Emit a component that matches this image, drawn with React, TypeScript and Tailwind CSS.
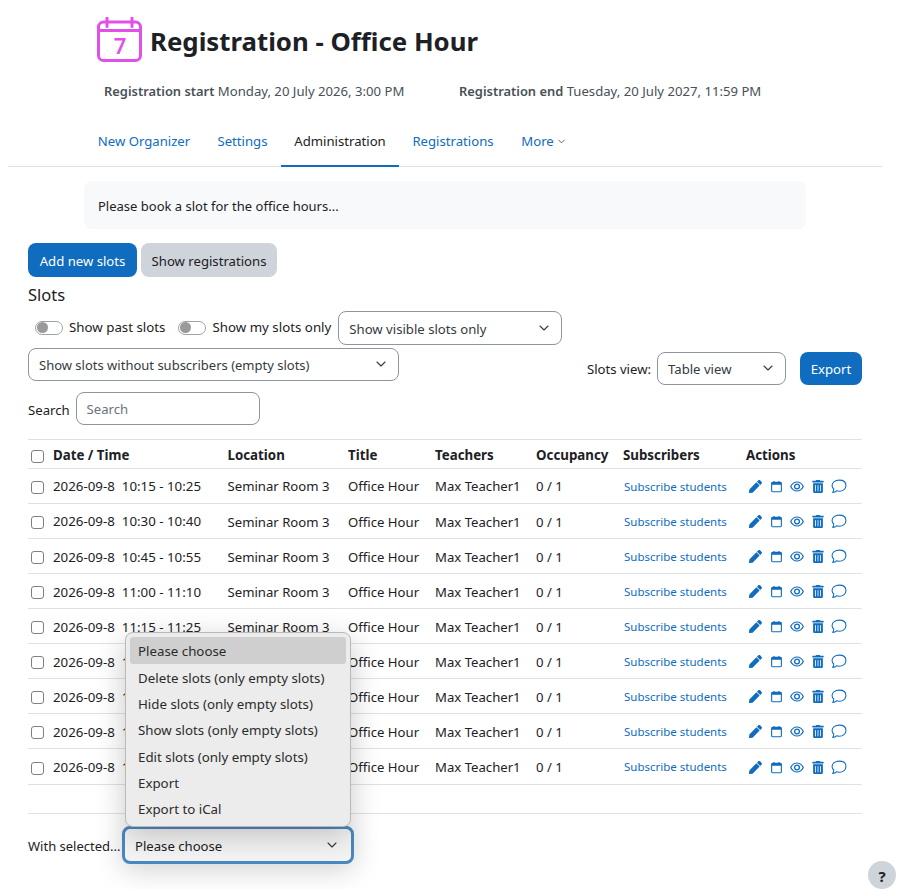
import { FaPen, FaTrashAlt } from "react-icons/fa";

const rows = [
  "10:15 - 10:25",
  "10:30 - 10:40",
  "10:45 - 10:55",
  "11:00 - 11:10",
  "11:15 - 11:25",
  "11:30 - 11:40",
  "11:45 - 11:55",
  "12:00 - 12:10",
  "12:15 - 12:25",
];

const menuItems = [
  "Delete slots (only empty slots)",
  "Hide slots (only empty slots)",
  "Show slots (only empty slots)",
  "Edit slots (only empty slots)",
  "Export",
  "Export to iCal",
];

function Chevron({ className }: { className?: string }) {
  return (
    <svg viewBox="0 0 10 6" className={className ?? "h-[6px] w-[10px]"} fill="none" stroke="#343a40" strokeWidth="1.1" strokeLinecap="round" strokeLinejoin="round">
      <path d="M1 1l4 4 4-4" />
    </svg>
  );
}

function Select({ label, className }: { label: string; className: string }) {
  return (
    <div className={`flex items-center justify-between rounded-lg border border-[#8f959e] bg-white pl-[10px] pr-[12px] text-[#343a40] ${className}`}>
      <span className="pt-[4px]">{label}</span>
      <Chevron />
    </div>
  );
}

function Toggle({ label }: { label: string }) {
  return (
    <div className="flex items-center">
      <div className="flex h-[14px] w-[28px] items-center rounded-full border border-[#9ca3ab] bg-white pl-[1px]">
        <div className="h-[11px] w-[11px] rounded-full bg-[#9a9a9a]" />
      </div>
      <span className="ml-[6px] text-[13.3px]">{label}</span>
    </div>
  );
}

function Checkbox() {
  return <div className="h-[13px] w-[13px] rounded-[3px] border border-[#7d7f8c] bg-white" />;
}

function CalendarSmall() {
  return (
    <svg viewBox="0 0 12 13" className="h-[13px] w-[11px]" fill="none">
      <rect x="0.7" y="2" width="10.6" height="10.3" rx="1.2" stroke="#0f6cbf" strokeWidth="1.2" />
      <rect x="0.7" y="2" width="10.6" height="2.6" fill="#0f6cbf" />
      <path d="M3.3 0.4v2M8.7 0.4v2" stroke="#0f6cbf" strokeWidth="1.2" />
    </svg>
  );
}

function EyeIcon() {
  return (
    <svg viewBox="0 0 14 11" className="h-[11px] w-[14px]" fill="none" stroke="#0f6cbf">
      <path d="M0.7 5.5C2.2 2.5 4.4 1 7 1s4.8 1.5 6.3 4.5C11.8 8.5 9.6 10 7 10S2.2 8.5 0.7 5.5z" strokeWidth="1.2" />
      <circle cx="7" cy="5.5" r="2.4" strokeWidth="1.3" />
    </svg>
  );
}

function CommentIcon() {
  return (
    <svg viewBox="0 0 15 14" className="h-[15px] w-[16px]" fill="none" stroke="#0f6cbf" strokeWidth="1" strokeLinejoin="round">
      <path d="M7.7 1C3.9 1 1 3.2 1 6c0 1.3.6 2.4 1.6 3.3-.1 1.2-.5 2.4-1 3.4 1.5-.2 2.8-.8 3.6-1.6.8.3 1.6.4 2.5.4 3.7 0 6.3-2.4 6.3-5.5S11.4 1 7.7 1z" />
    </svg>
  );
}

function ActivityIcon() {
  return (
    <svg viewBox="0 0 45 45" className="h-[45px] w-[45px]" fill="none">
      <rect x="1.5" y="5" width="42" height="38.5" rx="5" stroke="#e250ea" strokeWidth="3" />
      <path d="M1.5 13.5h42" stroke="#e250ea" strokeWidth="3" />
      <path d="M10 1v8.5M35 1v8.5" stroke="#e250ea" strokeWidth="3" strokeLinecap="round" />
      <text x="23" y="37" textAnchor="middle" fontSize="22" fontWeight="600" fill="#e250ea" fontFamily="'Noto Sans', sans-serif">7</text>
    </svg>
  );
}

export default function App() {
  return (
    <div className="relative h-[889px] w-[910px] overflow-hidden bg-white pt-[17px] font-['Noto_Sans',sans-serif] text-[13.15px] text-[#1d2125]">
      <header className="flex items-start pl-[97px]">
        <ActivityIcon />
        <h1 className="ml-[8px] h-[45px] text-[25.8px] font-bold leading-[48px]">Registration - Office Hour</h1>
      </header>

      <div className="mt-[20px] flex pl-[104px] text-[#495057]">
        <div className="w-[355px]"><span className="text-[12.9px] font-semibold">Registration start</span> Monday, 20 July 2026, 3:00 PM</div>
        <div><span className="text-[12.9px] font-semibold">Registration end</span> Tuesday, 20 July 2027, 11:59 PM</div>
      </div>

      <nav className="ml-[8px] mr-[28px] mt-[15px] flex h-[50px] border-b border-[#dee2e6] pl-[76px] text-[#0f6cbf]">
        <a className="flex w-[120px] items-center justify-center pt-[1px]">New Organizer</a>
        <a className="flex w-[77px] items-center justify-center pt-[1px]">Settings</a>
        <a className="-mb-px flex w-[118px] items-center justify-center border-b-2 border-[#0f6cbf] pt-[2px] text-[#1d2125]">Administration</a>
        <a className="flex w-[108px] items-center justify-center pt-[1px]">Registrations</a>
        <a className="flex w-[72px] items-center justify-center gap-[4px] pt-[1px]">
          More
          <Chevron className="h-[5px] w-[7px]" />
        </a>
      </nav>

      <main className="pl-[28px] pr-[48px]">
        <div className="ml-[56px] mt-[14px] flex h-[48px] w-[722px] items-center rounded-lg bg-[#f8f9fa] pl-[14px] pt-[5px] text-[13px]">
          Please book a slot for the office hours...
        </div>

        <div className="mt-[14px] flex gap-[4px]">
          <button className="h-[34px] w-[109px] rounded-lg bg-[#0f6cbf] pt-[5px] text-white">Add new slots</button>
          <button className="h-[34px] w-[136px] rounded-lg bg-[#ced4da] pt-[5px] text-[#1d2125]">Show registrations</button>
        </div>

        <h2 className="mt-[6px] text-[16.5px] leading-[24px]">Slots</h2>

        <div className="mt-[4px] flex h-[34px] items-center pl-[7px]">
          <Toggle label="Show past slots" />
          <div className="w-[13px]" />
          <Toggle label="Show my slots only" />
          <Select label="Show visible slots only" className="ml-[7px] h-[34px] w-[224px]" />
        </div>

        <div className="mt-[3px] flex items-start justify-between">
          <Select label="Show slots without subscribers (empty slots)" className="h-[33px] w-[371px] text-[13px]" />
          <div className="mt-[4px] flex items-center">
            <span className="mr-[6px] pt-[4px]">Slots view:</span>
            <Select label="Table view" className="h-[33px] w-[129px]" />
            <button className="ml-[14px] h-[33px] w-[62px] rounded-lg bg-[#0f6cbf] pt-[4px] text-white">Export</button>
          </div>
        </div>

        <div className="mt-[7px] flex items-center">
          <label className="mr-[6px] pt-[5px]">Search</label>
          <div className="flex h-[33px] w-[184px] items-center rounded-lg border border-[#8f959e] pl-[10px] pt-[4px] text-[#6a737b]">Search</div>
        </div>

        <table className="mt-[14px] w-[834px] table-fixed border-collapse border-t border-[#dee2e6]">
          <colgroup>
            <col className="w-[25px]" />
            <col className="w-[174.5px]" />
            <col className="w-[120.5px]" />
            <col className="w-[87px]" />
            <col className="w-[101px]" />
            <col className="w-[87px]" />
            <col className="w-[123px]" />
            <col />
          </colgroup>
          <thead>
            <tr className="h-[29px] border-b border-[#dee2e6] text-left text-[13.3px] font-bold [&>th]:pt-[5px]">
              <th className="pl-[3px]"><Checkbox /></th>
              <th>Date / Time</th>
              <th>Location</th>
              <th>Title</th>
              <th>Teachers</th>
              <th>Occupancy</th>
              <th>Subscribers</th>
              <th>Actions</th>
            </tr>
          </thead>
          <tbody>
            {rows.map((time) => (
              <tr key={time} className="h-[35.1px] border-b border-[#dee2e6] [&>td]:pt-[3px]">
                <td className="pl-[3px]"><Checkbox /></td>
                <td className="whitespace-nowrap text-[13.3px]">
                  2026-09-8<span className="ml-[7px]">{time}</span>
                </td>
                <td>Seminar Room 3</td>
                <td>Office Hour</td>
                <td>Max Teacher1</td>
                <td>0 / 1</td>
                <td className="pb-[2px] pl-[1px] text-[11.5px] text-[#0f6cbf]">Subscribe students</td>
                <td>
                  <div className="-ml-[1.5px] -mt-[2px] flex items-center text-[#0f6cbf]">
                    <span className="flex w-[21px] justify-center"><FaPen className="h-[13px] w-[13px]" /></span>
                    <span className="flex w-[21px] justify-center"><CalendarSmall /></span>
                    <span className="flex w-[21px] justify-center"><EyeIcon /></span>
                    <span className="flex w-[21px] justify-center"><FaTrashAlt className="h-[13px] w-[12px]" /></span>
                    <span className="flex w-[21px] justify-center"><CommentIcon /></span>
                  </div>
                </td>
              </tr>
            ))}
          </tbody>
        </table>

        <div className="mt-[28px] border-t border-[#dee2e6] pt-[14px]">
          <div className="relative flex items-center">
            <span className="pt-[5px] text-[13px]">With selected...</span>
            <div className="absolute left-[94px] top-[-2px] flex h-[38px] w-[232px] items-center justify-between rounded-lg border-[3px] border-[#4a88c2] bg-[#f4f4f4] pl-[10px] pr-[14px] shadow-[0_6px_28px_rgba(0,0,0,0.18)]">
              <span className="pt-[5px]">Please choose</span>
              <Chevron />
            </div>
            <span className="h-[34px]" />
            <div className="absolute bottom-[35px] left-[97px] w-[226px] rounded-lg border border-[#b9b9b9] bg-[#ececec] p-[4px] text-[13.3px] text-[#2b2b2b] shadow-[0_8px_30px_rgba(0,0,0,0.22)]">
              <div className="h-[26.33px] rounded-[3px] bg-[#cfcfcf] pl-[8px] pt-[1px] leading-[26.33px]">Please choose</div>
              {menuItems.map((item) => (
                <div key={item} className="h-[26.33px] pl-[8px] pt-[1px] leading-[26.33px]">{item}</div>
              ))}
            </div>
          </div>
        </div>
      </main>

      <div className="absolute left-[868px] top-[861px] flex h-[28px] w-[28px] items-center justify-center rounded-full bg-[#ced4da] pt-[2px] text-[15px] font-bold text-[#1d2125]">?</div>
    </div>
  );
}
